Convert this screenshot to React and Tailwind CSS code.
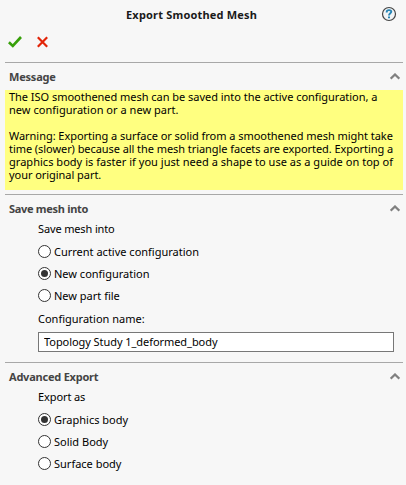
import { useState } from "react";

function HelpIcon() {
  return (
    <svg width="16" height="16" viewBox="0 0 16 16" fill="none">
      <circle cx="8" cy="8" r="6.500" fill="#f1f4f6" stroke="#444" strokeWidth="1.200" />
      <path d="M5.700 6.400V5.900C5.700 4.700 6.600 4.100 8 4.100s2.300.6 2.300 1.700C10.300 7.300 8 7.300 8 9.500" stroke="#2785b5" strokeWidth="1.900" />
      <path d="M7 10.500h2v1.800H7z" fill="#2785b5" />
    </svg>
  );
}

function Section({ title, titleClass, children }) {
  const [open, setOpen] = useState(true);

  return (
    <section className="border-t border-[#a8a8a8]">
      <button
        type="button"
        onClick={() => setOpen(!open)}
        className="flex h-[27px] w-full items-center justify-between pr-[3px] pl-1 text-left font-bold text-[#444]"
      >
        <span className={titleClass}>{title}</span>
        <svg width="10" height="7" viewBox="0 0 10 7" fill="none" className={open ? "" : "rotate-180"}>
          <path d="M.7 5.700 5 1.500l4.300 4.200" stroke="#808080" strokeWidth="2.200" />
        </svg>
      </button>
      {open && children}
    </section>
  );
}

function Radio({ name, label, checked, onChange }) {
  return (
    <label className="flex h-[22px] items-center gap-[3px] pt-px pb-[2px]">
      <input type="radio" name={name} checked={checked} onChange={onChange} className="sr-only" />
      <span className="grid size-[13px] shrink-0 place-items-center rounded-full border border-[#333] bg-white">
        {checked && <span className="size-[7px] rounded-full bg-[#333]" />}
      </span>
      <span>{label}</span>
    </label>
  );
}

const targets = ["Current active configuration", "New configuration", "New part file"];
const bodies = ["Graphics body", "Solid Body", "Surface body"];

export default function App() {
  const [target, setTarget] = useState("New configuration");
  const [body, setBody] = useState("Graphics body");
  const [name, setName] = useState("Topology Study 1_deformed_body");

  return (
    <div className="h-[485px] w-[406px] overflow-hidden bg-[#f7f7f7] pr-[3px] pl-[5px] font-['Noto_Sans','Open_Sans',sans-serif] text-[11px] leading-[13px] text-black">
      <header className="h-[62px]">
        <div className="flex h-[30px] items-center justify-between pr-[6px] pl-[121px]">
          <h1 className="pb-px font-bold tracking-[0.19px] text-[#1a1a1a]">Export Smoothed Mesh</h1>
          <span className="mb-[2px]">
            <HelpIcon />
          </span>
        </div>
        <div className="flex h-[23px] items-center gap-[15px] pl-[3px]">
          <button type="button" aria-label="OK">
            <svg width="14" height="12" viewBox="0 0 14 12" fill="none">
              <path d="M.9 6.300 4.800 10 13 1" stroke="#37a00a" strokeWidth="2.600" />
            </svg>
          </button>
          <button type="button" aria-label="Cancel">
            <svg width="11" height="12" viewBox="0 0 11 12" fill="none">
              <path d="m.8 1.300 9.400 9.400m0-9.400L.8 10.700" stroke="#e22408" strokeWidth="2.200" />
            </svg>
          </button>
        </div>
      </header>

      <Section title="Message" titleClass="tracking-[-0.2px]">
        <div className="mb-1 h-[100px] bg-[#ffff80] pl-1 whitespace-nowrap">
          <p>
            <span className="tracking-[-0.03px]">
              The ISO smoothened mesh can be saved into the active configuration, a
            </span>
            <br />
            <span className="tracking-[0.03px]">new configuration or a new part.</span>
          </p>
          <p className="mt-[13px]">
            <span className="tracking-[-0.04px]">
              Warning: Exporting a surface or solid from a smoothened mesh might take
            </span>
            <br />
            <span className="tracking-[-0.065px]">
              time (slower) because all the mesh triangle facets are exported. Exporting a
            </span>
            <br />
            <span className="tracking-[0.03px]">
              graphics body is faster if you just need a shape to use as a guide on top of
            </span>
            <br />
            <span className="tracking-[-0.05px]">your original part.</span>
          </p>
        </div>
      </Section>

      <Section title="Save mesh into" titleClass="tracking-[-0.3px]">
        <div className="h-[140px] pr-[9px] pl-[33px]">
          <p className="pb-[6px] tracking-[-0.14px]">Save mesh into</p>
          {targets.map((t) => (
            <Radio key={t} name="target" label={t} checked={target === t} onChange={() => setTarget(t)} />
          ))}
          <label className="block pt-[5px]">
            <span className="block h-[20px]">Configuration name:</span>
            <input
              value={name}
              onChange={(e) => setName(e.target.value)}
              className="block h-[20px] w-full border border-[#777] bg-white px-[5px] pb-px tracking-[-0.06px] outline-none"
            />
          </label>
        </div>
      </Section>

      <Section title="Advanced Export" titleClass="tracking-[-0.22px]">
        <div className="pl-[33px]">
          <p className="pb-[6px] tracking-[-0.1px]">Export as</p>
          {bodies.map((b) => (
            <Radio key={b} name="body" label={b} checked={body === b} onChange={() => setBody(b)} />
          ))}
        </div>
      </Section>
    </div>
  );
}
